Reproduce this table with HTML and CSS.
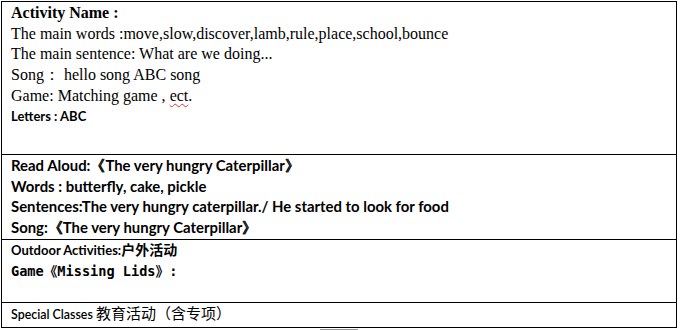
FILE: index.html
```html
<!DOCTYPE html>
<html>
<head>
<meta charset="utf-8">
<link rel="stylesheet" href="styles.css">
</head>
<body>
<div class="sheet">
  <div class="row row-activity">
    <div class="line serif bold">Activity Name :</div>
    <div class="line serif">The main words :move,slow,discover,lamb,rule,place,school,bounce</div>
    <div class="line serif">The main sentence: What are we doing...</div>
    <div class="line serif">Song：&nbsp;hello song ABC song</div>
    <div class="line serif">Game: Matching game , <span class="spell">ect</span>.</div>
    <div class="line sans bold small">Letters : ABC</div>
  </div>
  <div class="row row-read">
    <div class="line sans bold">Read Aloud:《The very hungry Caterpillar》</div>
    <div class="line sans bold">Words : butterfly, cake, pickle</div>
    <div class="line sans bold">Sentences:The very hungry caterpillar./ He started to look for food</div>
    <div class="line sans bold">Song:《The very hungry Caterpillar》</div>
  </div>
  <div class="row row-outdoor">
    <div class="line first sans bold small">Outdoor Activities:<span class="cjk bold">户外活动</span></div>
    <div class="line second mono bold">Game《Missing Lids》:</div>
  </div>
  <div class="row row-special">
    <div class="line sans semibold small">Special Classes <span class="cjk regular">教育活动（含专项）</span></div>
  </div>
</div>
<div class="scroll-thumb"></div>
</body>
</html>
```
FILE: styles.css
```css
html, body {
  margin: 0;
  padding: 0;
  background: #ffffff;
}
body {
  width: 681px;
  height: 330px;
  overflow: hidden;
  color: #000;
}
.sheet {
  margin: 1px 0 0 1px;
  width: 676px;
  border: 1px solid #000;
  box-sizing: border-box;
  display: flex;
  flex-direction: column;
}
.row {
  padding-left: 9px;
  box-sizing: border-box;
}
.row + .row {
  border-top: 1px solid #000;
}
.row-activity {
  height: 152px;
  padding-top: 1px;
}
.row-activity .line {
  line-height: 20.7px;
  height: 20.7px;
}
.row-read {
  height: 85px;
  padding-top: 0;
}
.row-read .line {
  line-height: 20.7px;
  height: 20.7px;
}
.row-outdoor {
  height: 63px;
  padding-top: 0;
}
.row-outdoor .first {
  line-height: 18px;
  height: 20px;
}
.row-outdoor .second {
  line-height: 22px;
  height: 22px;
}
.row-special {
  height: 25px;
}
.row-special .line {
  line-height: 19px;
}
.serif {
  font-family: "Liberation Serif", "Times New Roman", serif;
  font-size: 16px;
}
.sans {
  font-family: Lato, "Noto Sans", sans-serif;
  font-size: 14.9px;
}
.sans.small {
  font-size: 13px;
}
.row-special .sans.small {
  font-size: 12.4px;
}
.mono {
  font-family: "DejaVu Sans Mono", "Noto Sans CJK SC", monospace;
  font-size: 13.6px;
}
.cjk {
  font-family: "Noto Sans CJK SC", sans-serif;
  font-size: 14px;
}
.row-special .cjk {
  font-size: 15px;
}
.bold { font-weight: 700; }
.semibold { font-weight: 600; }
.regular { font-weight: 400; }
.spell {
  text-decoration: underline wavy #d33;
  text-decoration-thickness: 1px;
  text-underline-offset: 2px;
}
.scroll-thumb {
  margin: 1px 0 0 320px;
  width: 38px;
  height: 1px;
  background: #999;
}
```
